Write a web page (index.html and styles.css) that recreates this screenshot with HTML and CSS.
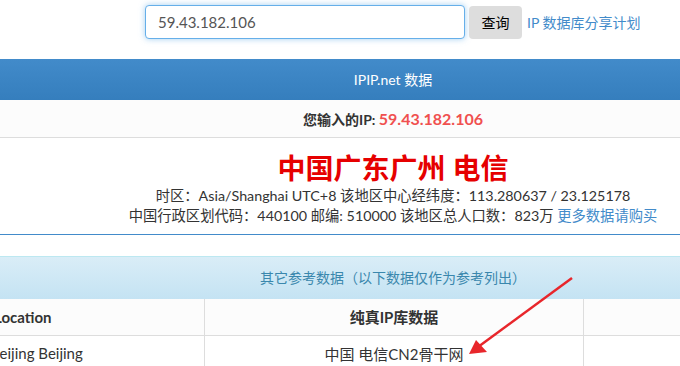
FILE: index.html
```html
<!DOCTYPE html>
<html lang="zh-CN">
<head>
    <meta charset="UTF-8">
    <title>IPIP.net 数据</title>
    <link rel="stylesheet" href="styles.css">
</head>
<body>
    <div class="search">
        <input type="text" class="ip-input" value="59.43.182.106">
        <button class="query">查询</button>
        <a class="share" href="#">IP 数据库分享计划</a>
    </div>

    <div class="page">
        <div class="panel primary">
            <div class="panel-heading">IPIP.net 数据</div>
            <div class="your-ip">您输入的IP: <span class="ip">59.43.182.106</span></div>
            <div class="result">
                <div class="place">中国广东广州 电信</div>
                <div class="line">时区：Asia/Shanghai UTC+8 该地区中心经纬度：113.280637 / 23.125178</div>
                <div class="line">中国行政区划代码：440100 邮编: 510000 该地区总人口数：823万 <a href="#">更多数据请购买</a></div>
            </div>
        </div>

        <div class="panel info">
            <div class="panel-heading">其它参考数据（以下数据仅作为参考列出）</div>
            <table class="ref">
                <tr class="head">
                    <th class="loc">Location</th>
                    <th>纯真IP库数据</th>
                    <th></th>
                </tr>
                <tr>
                    <td class="loc">Beijing Beijing</td>
                    <td>中国 电信CN2骨干网</td>
                    <td></td>
                </tr>
            </table>
        </div>
    </div>

    <!-- annotation arrow drawn over the screenshot -->
    <svg class="arrow" width="680" height="366" viewBox="0 0 680 366">
        <line x1="572" y1="278" x2="478" y2="347" stroke="#e8262b" stroke-width="2.5"/>
        <polygon points="469,354 476,340 487,352" fill="#e8262b"/>
    </svg>
</body>
</html>
```

FILE: styles.css
```css
body {
    margin: 0;
    width: 680px;
    height: 366px;
    overflow: hidden;
    position: relative;
    background: #fff;
    font-family: 'Lato', 'Noto Sans CJK SC', sans-serif;
    font-size: 14px;
    color: #333;
}
a {
    color: #428bca;
    text-decoration: none;
}
.search {
    display: flex;
    align-items: center;
    padding: 5px 0 0 145px;
    height: 34px;
}
.ip-input {
    box-sizing: border-box;
    width: 320px;
    height: 34px;
    padding: 0 12px;
    border: 1px solid #66afe9;
    border-radius: 4px;
    box-shadow: 0 0 6px rgba(102, 175, 233, 0.6);
    font-family: inherit;
    font-size: 15px;
    color: #555;
    outline: none;
}
.query {
    margin-left: 4px;
    width: 53px;
    height: 33px;
    border: none;
    border-radius: 4px;
    background: #ddd;
    font-family: inherit;
    font-size: 14px;
    color: #000;
}
.share {
    margin-left: 5px;
    margin-top: -1px;
}
.page {
    width: 1214px;
    margin-left: -214px;
}
.panel {
    text-align: center;
}
.panel.primary {
    margin-top: 20px;
    border: 1px solid #428bca;
    border-top: none;
}
.primary .panel-heading {
    height: 41px;
    line-height: 41px;
    color: #fff;
    background: linear-gradient(#428bca, #357ebd);
}
.your-ip {
    height: 37px;
    line-height: 38px;
    border-bottom: 1px solid #ddd;
    background: #fcfcfc;
    font-weight: bold;
}
.your-ip .ip {
    color: #f0504f;
    font-size: 16px;
}
.result {
    padding: 12px 0 8px;
}
.place {
    font-size: 28px;
    font-weight: bold;
    line-height: 36px;
    color: #e60000;
}
.line {
    font-size: 14.3px;
    line-height: 20px;
}
.panel.info {
    margin-top: 21px;
}
.info .panel-heading {
    height: 42px;
    line-height: 42px;
    border-top: 1px solid #bce8f1;
    color: #3a87ad;
    background: linear-gradient(#d9edf7, #c4e3f3);
}
.ref {
    width: 100%;
    border-collapse: collapse;
    table-layout: fixed;
    font-size: 15px;
}
.ref th,
.ref td {
    box-sizing: border-box;
    height: 36px;
    padding: 0;
    border: 1px solid #ddd;
    border-top: none;
}
.ref th {
    background: #fcfcfc;
}
.ref th:nth-child(1) {
    width: 418px;
}
.ref th:nth-child(2) {
    width: 379px;
}
.ref .loc {
    text-align: left;
}
.ref th.loc {
    padding-left: 207px;
}
.ref td.loc {
    padding-left: 203px;
}
.arrow {
    position: absolute;
    left: 0;
    top: 0;
    pointer-events: none;
}
```
